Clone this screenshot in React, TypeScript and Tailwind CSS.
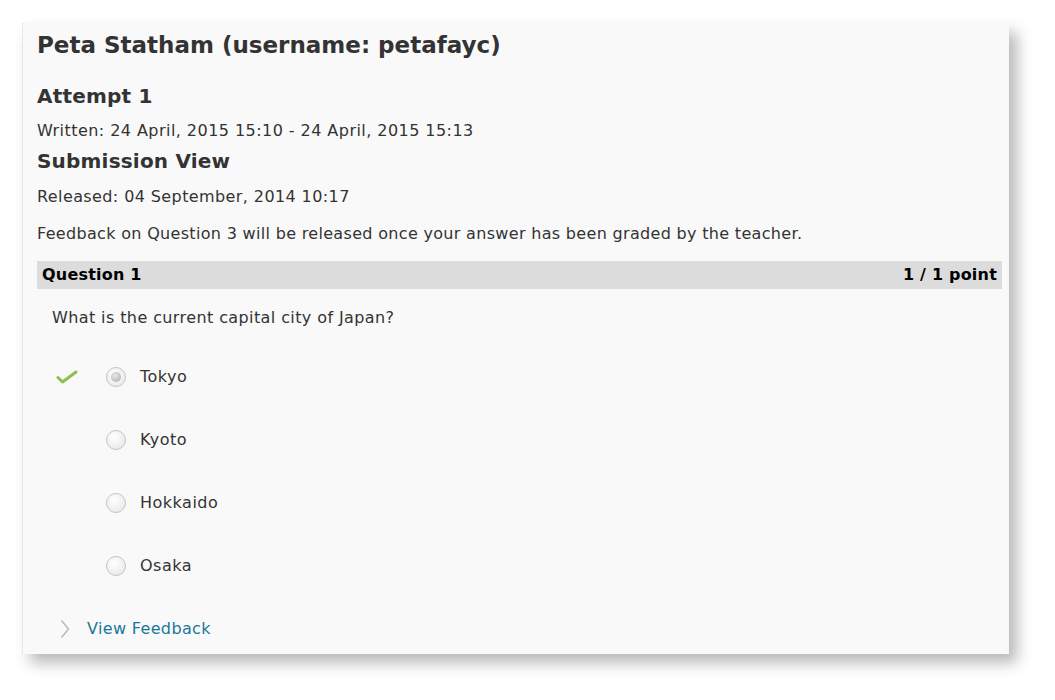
import React from "react";

function CheckIcon() {
  return (
    <svg width="22" height="14" viewBox="0 0 22 14" aria-hidden>
      <path
        d="M2 7.5 L6.5 12 L20 2"
        fill="none"
        stroke="#8cbf4f"
        strokeWidth="3"
        strokeLinecap="round"
        strokeLinejoin="round"
      />
    </svg>
  );
}

function Radio({ checked }: { checked?: boolean }) {
  return (
    <span className="flex h-5 w-5 items-center justify-center rounded-full border border-[#c4c4c4] bg-[radial-gradient(circle_at_40%_35%,#ffffff,#ececec_70%)]">
      {checked && (
        <span className="h-[10px] w-[10px] rounded-full bg-[radial-gradient(circle_at_40%_35%,#e8e8e8,#a9a9a9)]" />
      )}
    </span>
  );
}

function Chevron() {
  return (
    <svg width="10" height="20" viewBox="0 0 10 20" aria-hidden>
      <path
        d="M1.5 1.5 L8.5 10 L1.5 18.5"
        fill="none"
        stroke="#b9b9b9"
        strokeWidth="1.5"
      />
    </svg>
  );
}

const options = [
  { label: "Tokyo", correct: true, checked: true },
  { label: "Kyoto" },
  { label: "Hokkaido" },
  { label: "Osaka" },
];

export default function App() {
  return (
    <div className="min-h-[700px] bg-white pl-[22px] pt-[23px] font-['DejaVu_Sans',Verdana,sans-serif] text-[#333]">
      <div className="h-[631px] w-[987px] border-l border-dotted border-[#d6d6d6] bg-[#f9f9f9] pl-[14px] pr-[7px] pt-[8px] shadow-[8px_9px_14px_rgba(0,0,0,0.28)]">
        <h1 className="h-[28px] text-[23px] font-bold leading-[28px]">
          Peta Statham (username: petafayc)
        </h1>
        <h2 className="mt-[24px] h-[26px] text-[20px] font-bold leading-[26px] tracking-[0.2px]">
          Attempt 1
        </h2>
        <p className="mt-[12px] text-[16px] leading-[20px] tracking-[0.45px]">
          Written: 24 April, 2015 15:10 - 24 April, 2015 15:13
        </p>
        <h2 className="mt-[7px] h-[26px] text-[20px] font-bold leading-[26px] tracking-[0.2px]">
          Submission View
        </h2>
        <p className="mt-[13px] text-[16px] leading-[20px] tracking-[0.4px]">
          Released: 04 September, 2014 10:17
        </p>
        <p className="mt-[17px] text-[16px] leading-[20px] tracking-[0.32px]">
          Feedback on Question 3 will be released once your answer has been
          graded by the teacher.
        </p>
        <div className="mt-[17px] flex h-[28px] items-center justify-between bg-[#dcdcdc] px-[5px] text-[16px] font-bold tracking-[0.2px] text-black">
          <span>Question 1</span>
          <span>1 / 1 point</span>
        </div>
        <p className="mt-[19px] pl-[15px] text-[16px] leading-[20px] tracking-[0.4px]">
          What is the current capital city of Japan?
        </p>
        <ul className="mt-[17px]">
          {options.map((o) => (
            <li key={o.label} className="flex h-[63px] items-center">
              <span className="flex w-[69px] justify-end pr-[28px]">
                {o.correct && <CheckIcon />}
              </span>
              <Radio checked={o.checked} />
              <span className="ml-[14px] text-[16px] tracking-[0.5px]">
                {o.label}
              </span>
            </li>
          ))}
        </ul>
        <div className="mt-[22px] flex h-[20px] items-center">
          <span className="ml-[23px] flex w-[10px]">
            <Chevron />
          </span>
          <a
            href="#feedback"
            className="ml-[17px] text-[16px] tracking-[0.35px] text-[#19789a]"
          >
            View Feedback
          </a>
        </div>
      </div>
    </div>
  );
}
